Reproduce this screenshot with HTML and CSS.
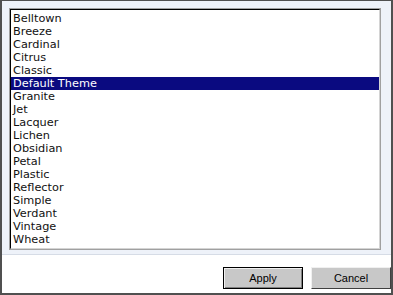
FILE: index.html
```html
<!DOCTYPE html>
<html>
<head>
<meta charset="utf-8">
<link rel="stylesheet" href="styles.css">
</head>
<body>
<div class="window">
  <div class="panel">
    <div class="listbox">
      <ul class="items">
        <li>Belltown</li>
        <li>Breeze</li>
        <li>Cardinal</li>
        <li>Citrus</li>
        <li>Classic</li>
        <li class="selected">Default Theme</li>
        <li>Granite</li>
        <li>Jet</li>
        <li>Lacquer</li>
        <li>Lichen</li>
        <li>Obsidian</li>
        <li>Petal</li>
        <li>Plastic</li>
        <li>Reflector</li>
        <li>Simple</li>
        <li>Verdant</li>
        <li>Vintage</li>
        <li>Wheat</li>
      </ul>
    </div>
  </div>
  <div class="footer">
    <button class="btn btn-default">Apply</button>
    <button class="btn">Cancel</button>
  </div>
</div>
</body>
</html>
```

FILE: styles.css
```css
html, body {
  margin: 0;
  padding: 0;
  background: #ffffff;
}

.window {
  width: 393px;
  height: 295px;
  box-sizing: border-box;
  border-top: 1px solid #505050;
  border-left: 2px solid #505050;
  border-right: 2px solid #505050;
  border-bottom: 2px solid #505050;
  display: flex;
  flex-direction: column;
  background: #ffffff;
}

.panel {
  height: 254px;
  box-sizing: border-box;
  background: #eef2f9;
  padding: 7px 10px 0 7px;
  border-bottom: 1px solid #d6dce6;
}

.listbox {
  height: 242px;
  box-sizing: border-box;
  border: 1px solid #a0a0a0;
  background: #ffffff;
}

.items {
  list-style: none;
  margin: 0;
  padding: 2px 0 0 0;
  height: 100%;
  box-sizing: border-box;
  border-top: 1px solid #000000;
  border-left: 1px solid #000000;
  border-right: 1px solid #d4d4d4;
  border-bottom: 1px solid #d4d4d4;
  font-family: "DejaVu Sans", Verdana, sans-serif;
  font-size: 11.3px;
  color: #111111;
}

.items li {
  height: 13px;
  line-height: 13px;
  padding-left: 2px;
  white-space: nowrap;
}

.items li.selected {
  background: #0a0a80;
  color: #ffffff;
}

.footer {
  flex: 1;
  display: flex;
  justify-content: flex-end;
  align-items: flex-start;
  gap: 8px;
  padding: 12px 0 0 0;
  background: #ffffff;
}

.btn {
  width: 80px;
  height: 22px;
  box-sizing: border-box;
  margin: 0;
  padding: 0;
  background: #c8c8c8;
  font-family: "Liberation Sans", Arial, sans-serif;
  font-size: 11px;
  color: #000000;
  border-top: 1px solid #f0f0f0;
  border-left: 1px solid #f0f0f0;
  border-right: 1px solid #404040;
  border-bottom: 1px solid #404040;
}

.btn-default {
  border: 1px solid #000000;
  box-shadow: inset 1px 1px 0 #f0f0f0, inset -1px -1px 0 #808080;
}
```
